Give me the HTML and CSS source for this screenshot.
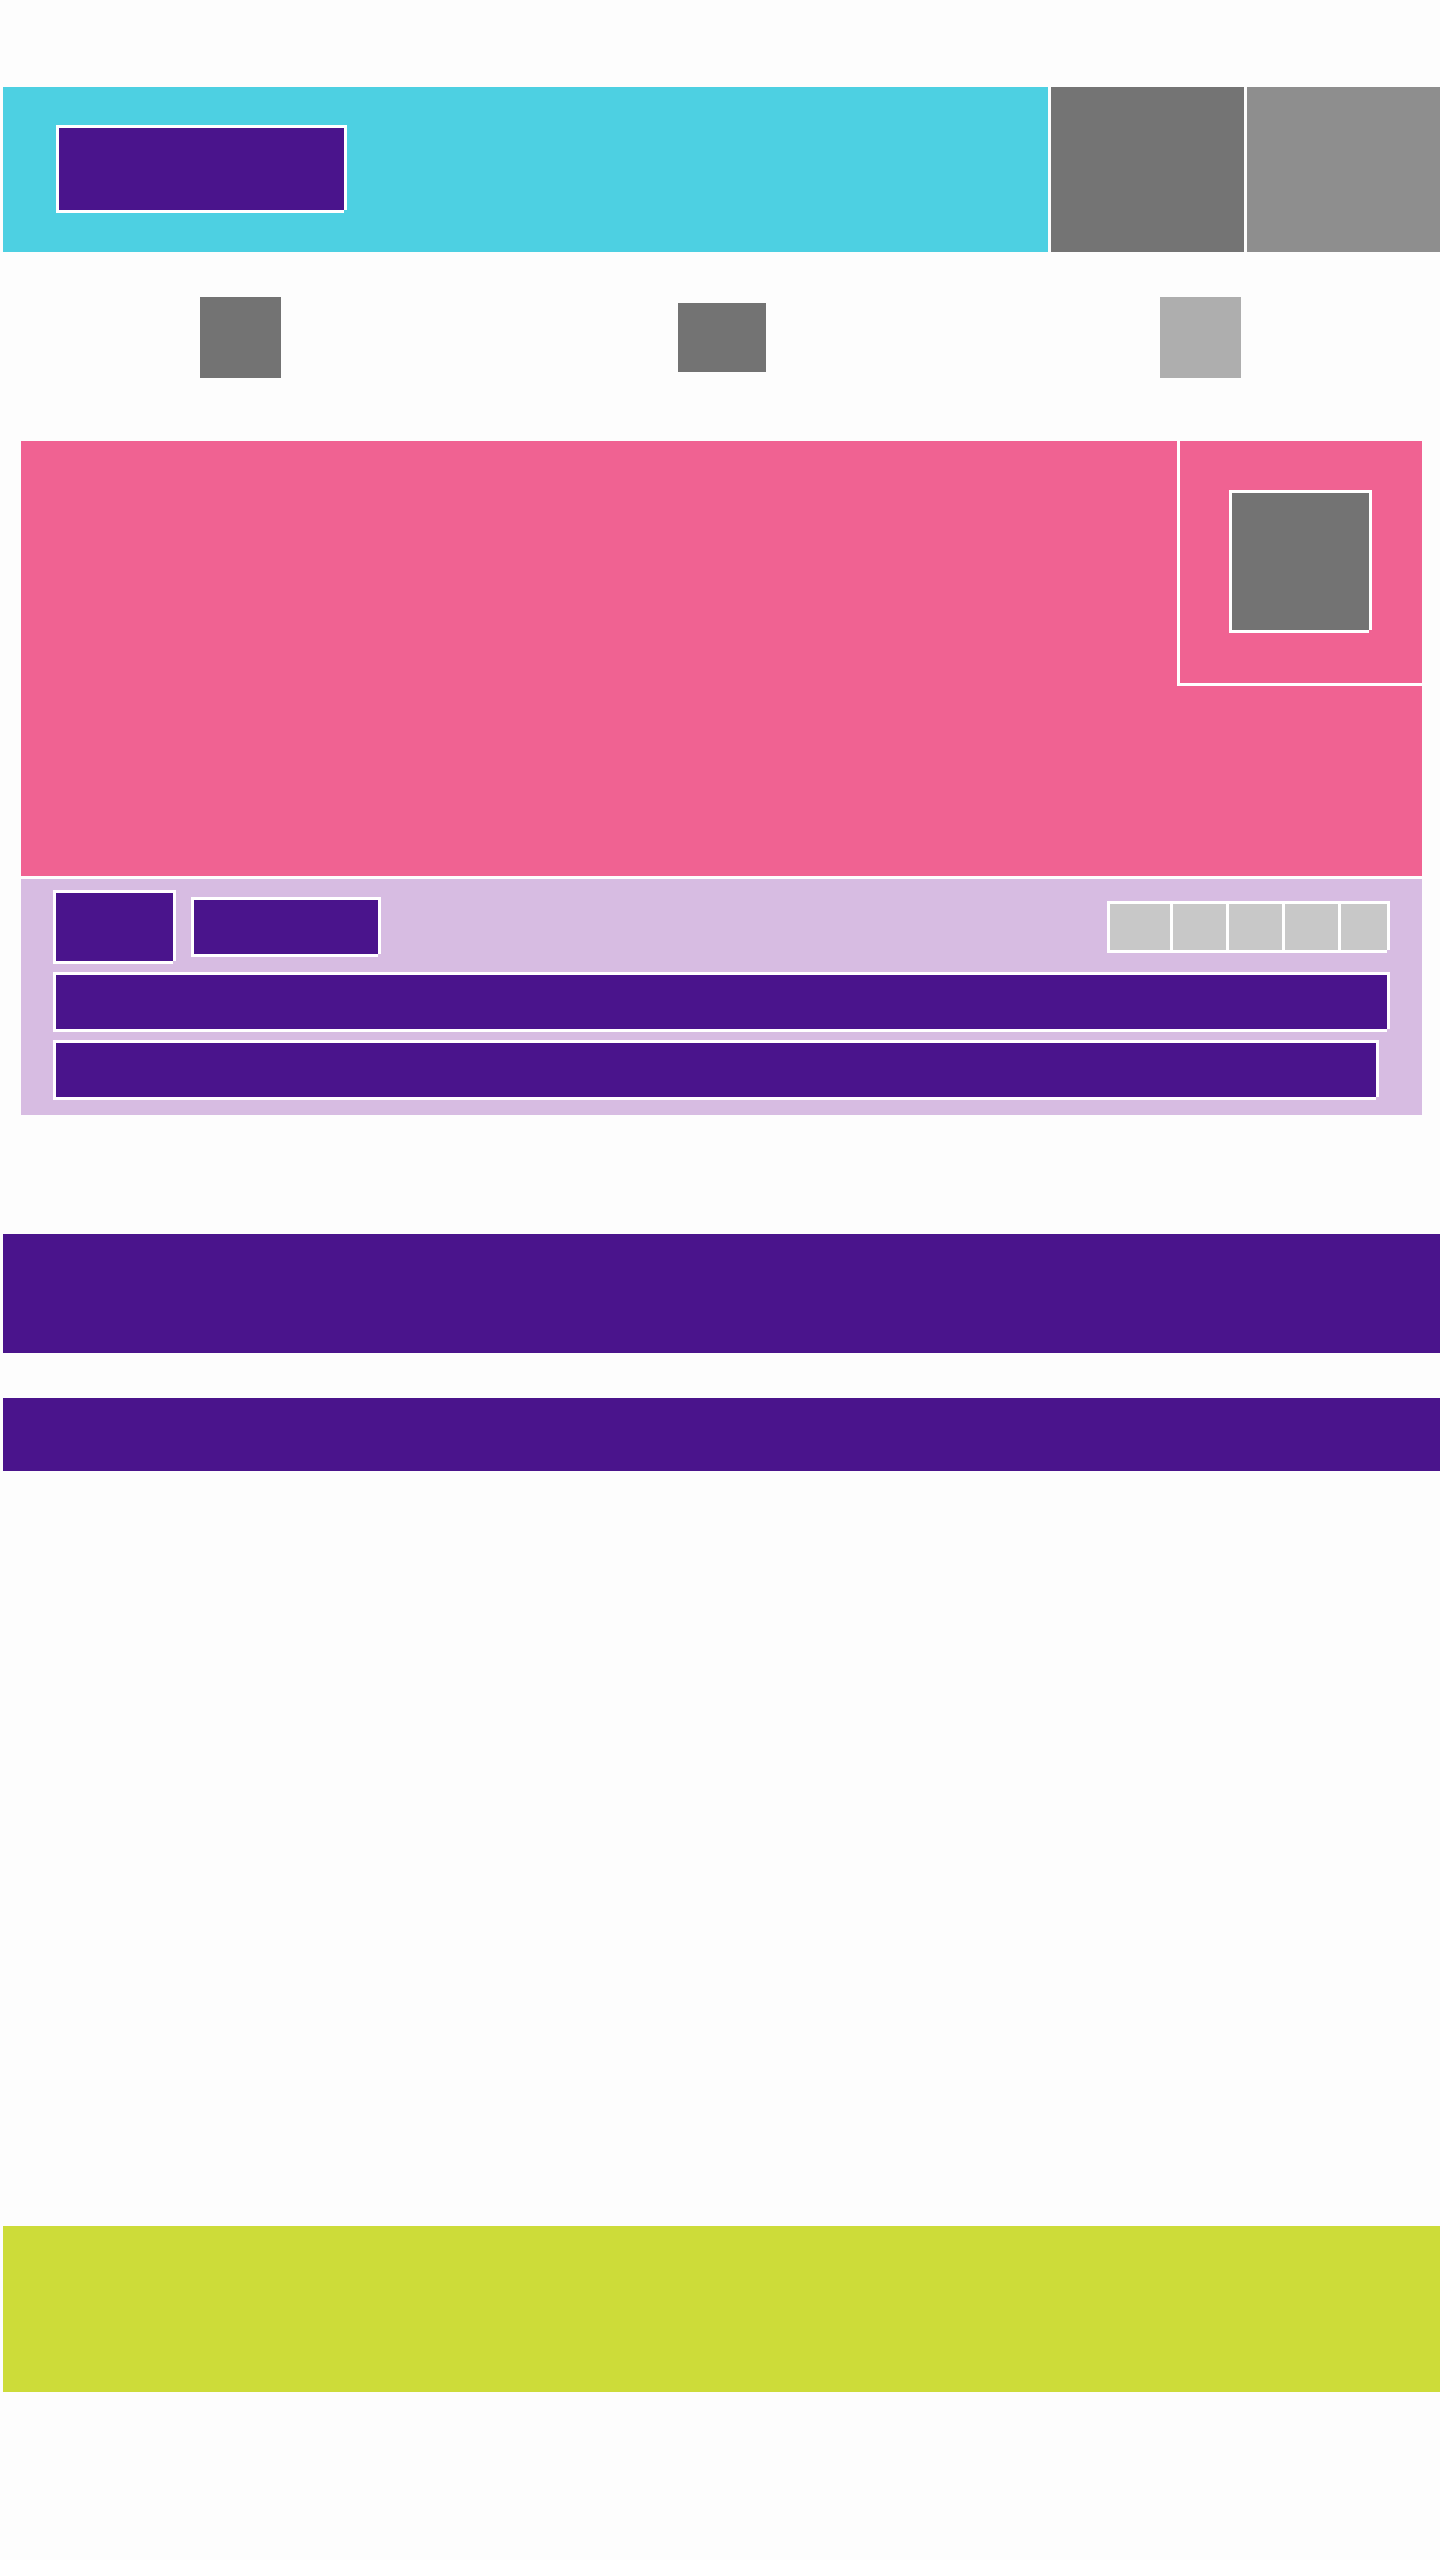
FILE: index.html
```html
<!DOCTYPE html>
<html lang="en">
<head>
<meta charset="utf-8">
<title>Wireframe</title>
<link rel="stylesheet" href="styles.css">
</head>
<body>
<div class="page">
  <header class="header">
    <div class="header-main">
      <div class="brand wb"></div>
    </div>
    <div class="header-tile dark"></div>
    <div class="header-tile mid"></div>
  </header>

  <nav class="icons">
    <div class="icon-cell"><div class="icon icon-a"></div></div>
    <div class="icon-cell"><div class="icon icon-b"></div></div>
    <div class="icon-cell"><div class="icon icon-c"></div></div>
  </nav>

  <section class="card">
    <div class="hero">
      <div class="hero-panel">
        <div class="hero-thumb wb"></div>
      </div>
    </div>
    <div class="meta">
      <div class="meta-top">
        <div class="avatar wb"></div>
        <div class="tag wb"></div>
        <div class="rating wb">
          <span class="star s1"></span>
          <span class="star s2"></span>
          <span class="star s2"></span>
          <span class="star s2"></span>
          <span class="star s3"></span>
        </div>
      </div>
      <div class="line wb"></div>
      <div class="line short wb"></div>
    </div>
  </section>

  <div class="band band-tall"></div>
  <div class="band band-short"></div>

  <footer class="footer"></footer>
</div>
</body>
</html>
```

FILE: styles.css
```css
html, body {
  margin: 0;
  padding: 0;
  background: #fdfdfd;
  font-family: "Liberation Sans", Arial, sans-serif;
}

.page {
  padding: 87px 0 168px 3px;
}

/* white frame: top/left border + right/bottom shadow strips */
.wb {
  box-sizing: border-box;
  border-top: 3px solid #fff;
  border-left: 3px solid #fff;
  box-shadow: 3px 0 0 #fff, 0 3px 0 #fff;
}

.header {
  display: flex;
  gap: 3px;
  height: 165px;
}

.header-main {
  flex: 1;
  background: #4dd0e2;
  display: flex;
  align-items: flex-start;
}

.brand {
  width: 288px;
  height: 85px;
  margin: 38px 0 0 53px;
  background: #4a148c;
}

.header-tile {
  width: 193px;
}
.header-tile.dark { background: #747474; }
.header-tile.mid { background: #8e8e8e; }

.icons {
  display: grid;
  grid-template-columns: 1fr 1fr 1fr;
  height: 81px;
  margin-top: 45px;
}

.icon-cell {
  display: flex;
  align-items: center;
  justify-content: center;
}

.icon { background: #737373; }
.icon-a { width: 81px; height: 81px; margin-left: -4px; }
.icon-b { width: 88px; height: 69px; }
.icon-c { width: 81px; height: 81px; background: #aeaeae; }

.card {
  margin: 63px 18px 0 18px;
  display: flex;
  flex-direction: column;
  gap: 3px;
}

.hero {
  height: 435px;
  background: #f06292;
  display: flex;
  justify-content: flex-end;
  align-items: flex-start;
}

.hero-panel {
  box-sizing: border-box;
  width: 245px;
  height: 245px;
  border-left: 3px solid #fff;
  border-bottom: 3px solid #fff;
  padding: 49px 0 0 49px;
}

.hero-thumb {
  width: 140px;
  height: 140px;
  background: #737373;
}

.meta {
  background: #d7bce2;
  height: 236px;
  box-sizing: border-box;
  padding: 11px 35px 0 32px;
  display: flex;
  flex-direction: column;
  gap: 11px;
}

.meta-top {
  display: flex;
  align-items: center;
  height: 71px;
}

.avatar {
  width: 120px;
  height: 71px;
  background: #4a148c;
}

.tag {
  width: 187px;
  height: 57px;
  margin-left: 18px;
  background: #4a148c;
}

.rating {
  margin-left: auto;
  width: 280px;
  height: 49px;
  background: #fff;
  display: flex;
  gap: 3px;
}

.star { background: #c8c8c8; height: 46px; }
.star.s1 { width: 60px; }
.star.s2 { width: 53px; }
.star.s3 { width: 46px; }

.line {
  height: 57px;
  background: #4a148c;
}

.line.short {
  margin-right: 11px;
}

.band {
  background: #4a148c;
}

.band-tall {
  height: 119px;
  margin-top: 119px;
}

.band-short {
  height: 73px;
  margin-top: 45px;
}

.footer {
  height: 166px;
  margin-top: 755px;
  background: #cddc39;
}
```
